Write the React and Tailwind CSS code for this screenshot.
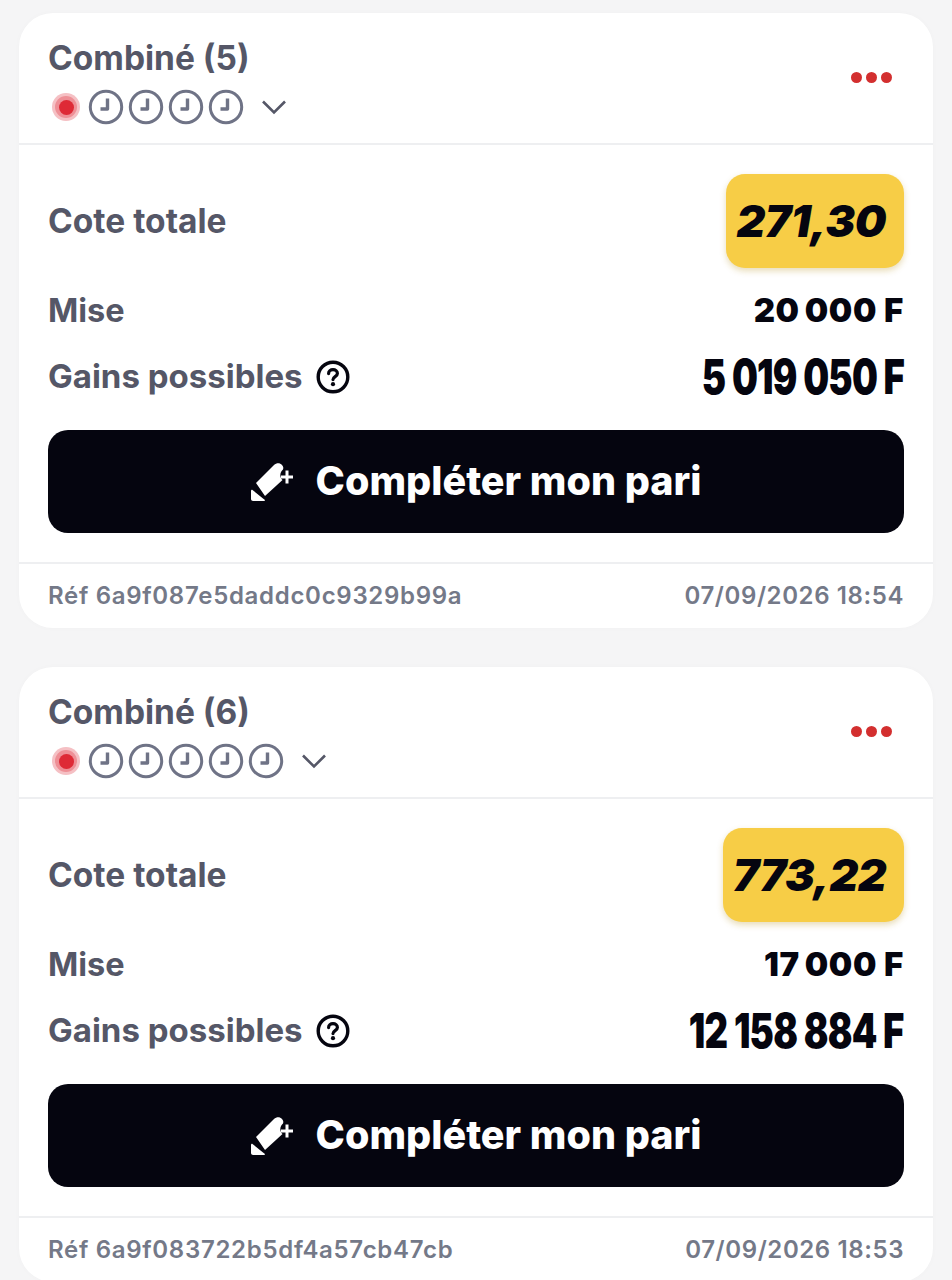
const bets = [
  {
    count: 5,
    odds: "271,30",
    stake: "20\u2009000 F",
    gains: "5 019 050 F",
    ref: "6a9f087e5daddc0c9329b99a",
    date: "07/09/2026 18:54",
  },
  {
    count: 6,
    odds: "773,22",
    stake: "17\u2009000 F",
    gains: "12 158 884 F",
    ref: "6a9f083722b5df4a57cb47cb",
    date: "07/09/2026 18:53",
  },
];

function ClockIcon() {
  return (
    <svg width="36" height="36" viewBox="0 0 36 36" fill="none" className="shrink-0">
      <circle cx="18" cy="18" r="15.7" stroke="#6f7386" strokeWidth="3" />
      <path d="M19.5 9.500V20H12.500" stroke="#6f7386" strokeWidth="3.400" strokeLinejoin="round" />
    </svg>
  );
}

function LiveDot() {
  return (
    <div className="w-7 h-7 rounded-full bg-[#f5c0c4] flex items-center justify-center shrink-0">
      <div className="w-[22px] h-[22px] rounded-full bg-[#ee8f96] flex items-center justify-center">
        <div className="w-[15px] h-[15px] rounded-full bg-[#de2a36]" />
      </div>
    </div>
  );
}

function HelpIcon() {
  return (
    <svg width="34" height="34" viewBox="0 0 34 34" fill="none" className="shrink-0">
      <circle cx="17" cy="17" r="14.800" stroke="#05050f" strokeWidth="3.400" />
      <path d="M12.600 13.600c0-2.500 2-4 4.400-4s4.400 1.500 4.400 3.800c0 3.200-4.400 3.200-4.400 6.200" stroke="#05050f" strokeWidth="3.200" strokeLinecap="round" />
      <circle cx="17" cy="24.200" r="2.100" fill="#05050f" />
    </svg>
  );
}

function EraserIcon() {
  return (
    <svg width="42" height="40" viewBox="0 0 42 40" fill="white" className="shrink-0">
      <path d="M5 21 23 3c2.500-2.500 6-2.500 8 0 1.500 1.500 1.500 3 1 4.500-3.500 3-3.500 8-.5 10.500L14 34z" />
      <path d="M1.500 28 12 36.500 14 38c0 .5-.5 1-1 1H2c-1 0-2-1-2-2v-8c0-1 1-1.500 1.500-1z" />
      <path d="M34.500 8.500h3v5h4.500v3h-4.500v5h-3v-5H30v-3h4.500z" />
    </svg>
  );
}

function BetCard({ bet }) {
  return (
    <div className="h-[615px] mx-[19px] bg-white rounded-[34px] shrink-0 flex flex-col text-[#555767] shadow-[0_0_6px_rgba(0,0,0,0.02)]">
      <div className="h-[132px] pl-[29px] pr-[41px] flex items-center justify-between border-b-2 border-[#eeeff1]">
        <div className="self-start pt-[26px]">
          <div className="text-[33.500px] leading-[38px] font-bold">Combiné ({bet.count})</div>
          <div className="flex items-center mt-[12px] ml-[4px] gap-[4px]">
            <LiveDot />
            <div className="flex gap-[4px] ml-[4px]">
              {Array.from({ length: bet.count - 1 }).map((_, i) => (
                <ClockIcon key={i} />
              ))}
            </div>
            <svg width="28" height="18" viewBox="0 0 28 18" fill="none" className="ml-[12px]">
              <path d="M3 3.500 14 14.500 25 3.500" stroke="#555767" strokeWidth="2.600" />
            </svg>
          </div>
        </div>
        <div className="flex gap-[4px] -mt-[2px]">
          <div className="w-[11px] h-[11px] rounded-full bg-[#d32f2f]" />
          <div className="w-[11px] h-[11px] rounded-full bg-[#d32f2f]" />
          <div className="w-[11px] h-[11px] rounded-full bg-[#d32f2f]" />
        </div>
      </div>

      <div className="flex-1 pl-[29px] pr-[29px] pt-[29px]">
        <div className="flex items-center justify-between">
          <div className="text-[33.500px] font-bold">Cote totale</div>
          <div className="h-[94px] pl-[10px] pr-[18px] bg-[#f7cd46] rounded-[19px] shadow-[0_3px_6px_rgba(180,140,20,0.3)] flex items-center justify-center text-[#05050f] text-[44.500px] font-black italic tracking-[-0.500px]">
            {bet.odds}
          </div>
        </div>
        <div className="flex items-center justify-between mt-[21px] h-[44px]">
          <div className="text-[32.500px] font-bold">Mise</div>
          <div className="text-[#05050f] text-[33px] font-black tracking-[0.600px]">{bet.stake}</div>
        </div>
        <div className="flex items-center justify-between mt-[22px] h-[44px]">
          <div className="flex items-center gap-[13px]">
            <span className="text-[33px] font-bold">Gains possibles</span>
            <HelpIcon />
          </div>
          <div className="text-[#05050f] text-[48px] font-black origin-right scale-x-[0.76] whitespace-nowrap tracking-[-1px]">
            {bet.gains}
          </div>
        </div>
        <button className="w-full h-[103px] mt-[31px] bg-[#05050f] rounded-[20px] flex items-center justify-center gap-[23px] text-white text-[39.500px] font-extrabold">
          <EraserIcon />
          <span>Compléter mon pari</span>
        </button>
      </div>

      <div className="h-[66px] pl-[29px] pr-[29px] border-t-2 border-[#eeeff1] flex items-center justify-between text-[24px] font-semibold text-[#747988] tracking-[0.600px]">
        <span className="tracking-[0.700px]">Réf {bet.ref}</span>
        <span>{bet.date}</span>
      </div>
    </div>
  );
}

export default function App() {
  return (
    <div
      className="h-[1280px] overflow-hidden bg-[#f5f5f6] pt-[13px] flex flex-col gap-[39px]"
      style={{ fontFamily: "Inter, 'Liberation Sans', sans-serif" }}
    >
      {bets.map((bet) => (
        <BetCard key={bet.ref} bet={bet} />
      ))}
    </div>
  );
}
